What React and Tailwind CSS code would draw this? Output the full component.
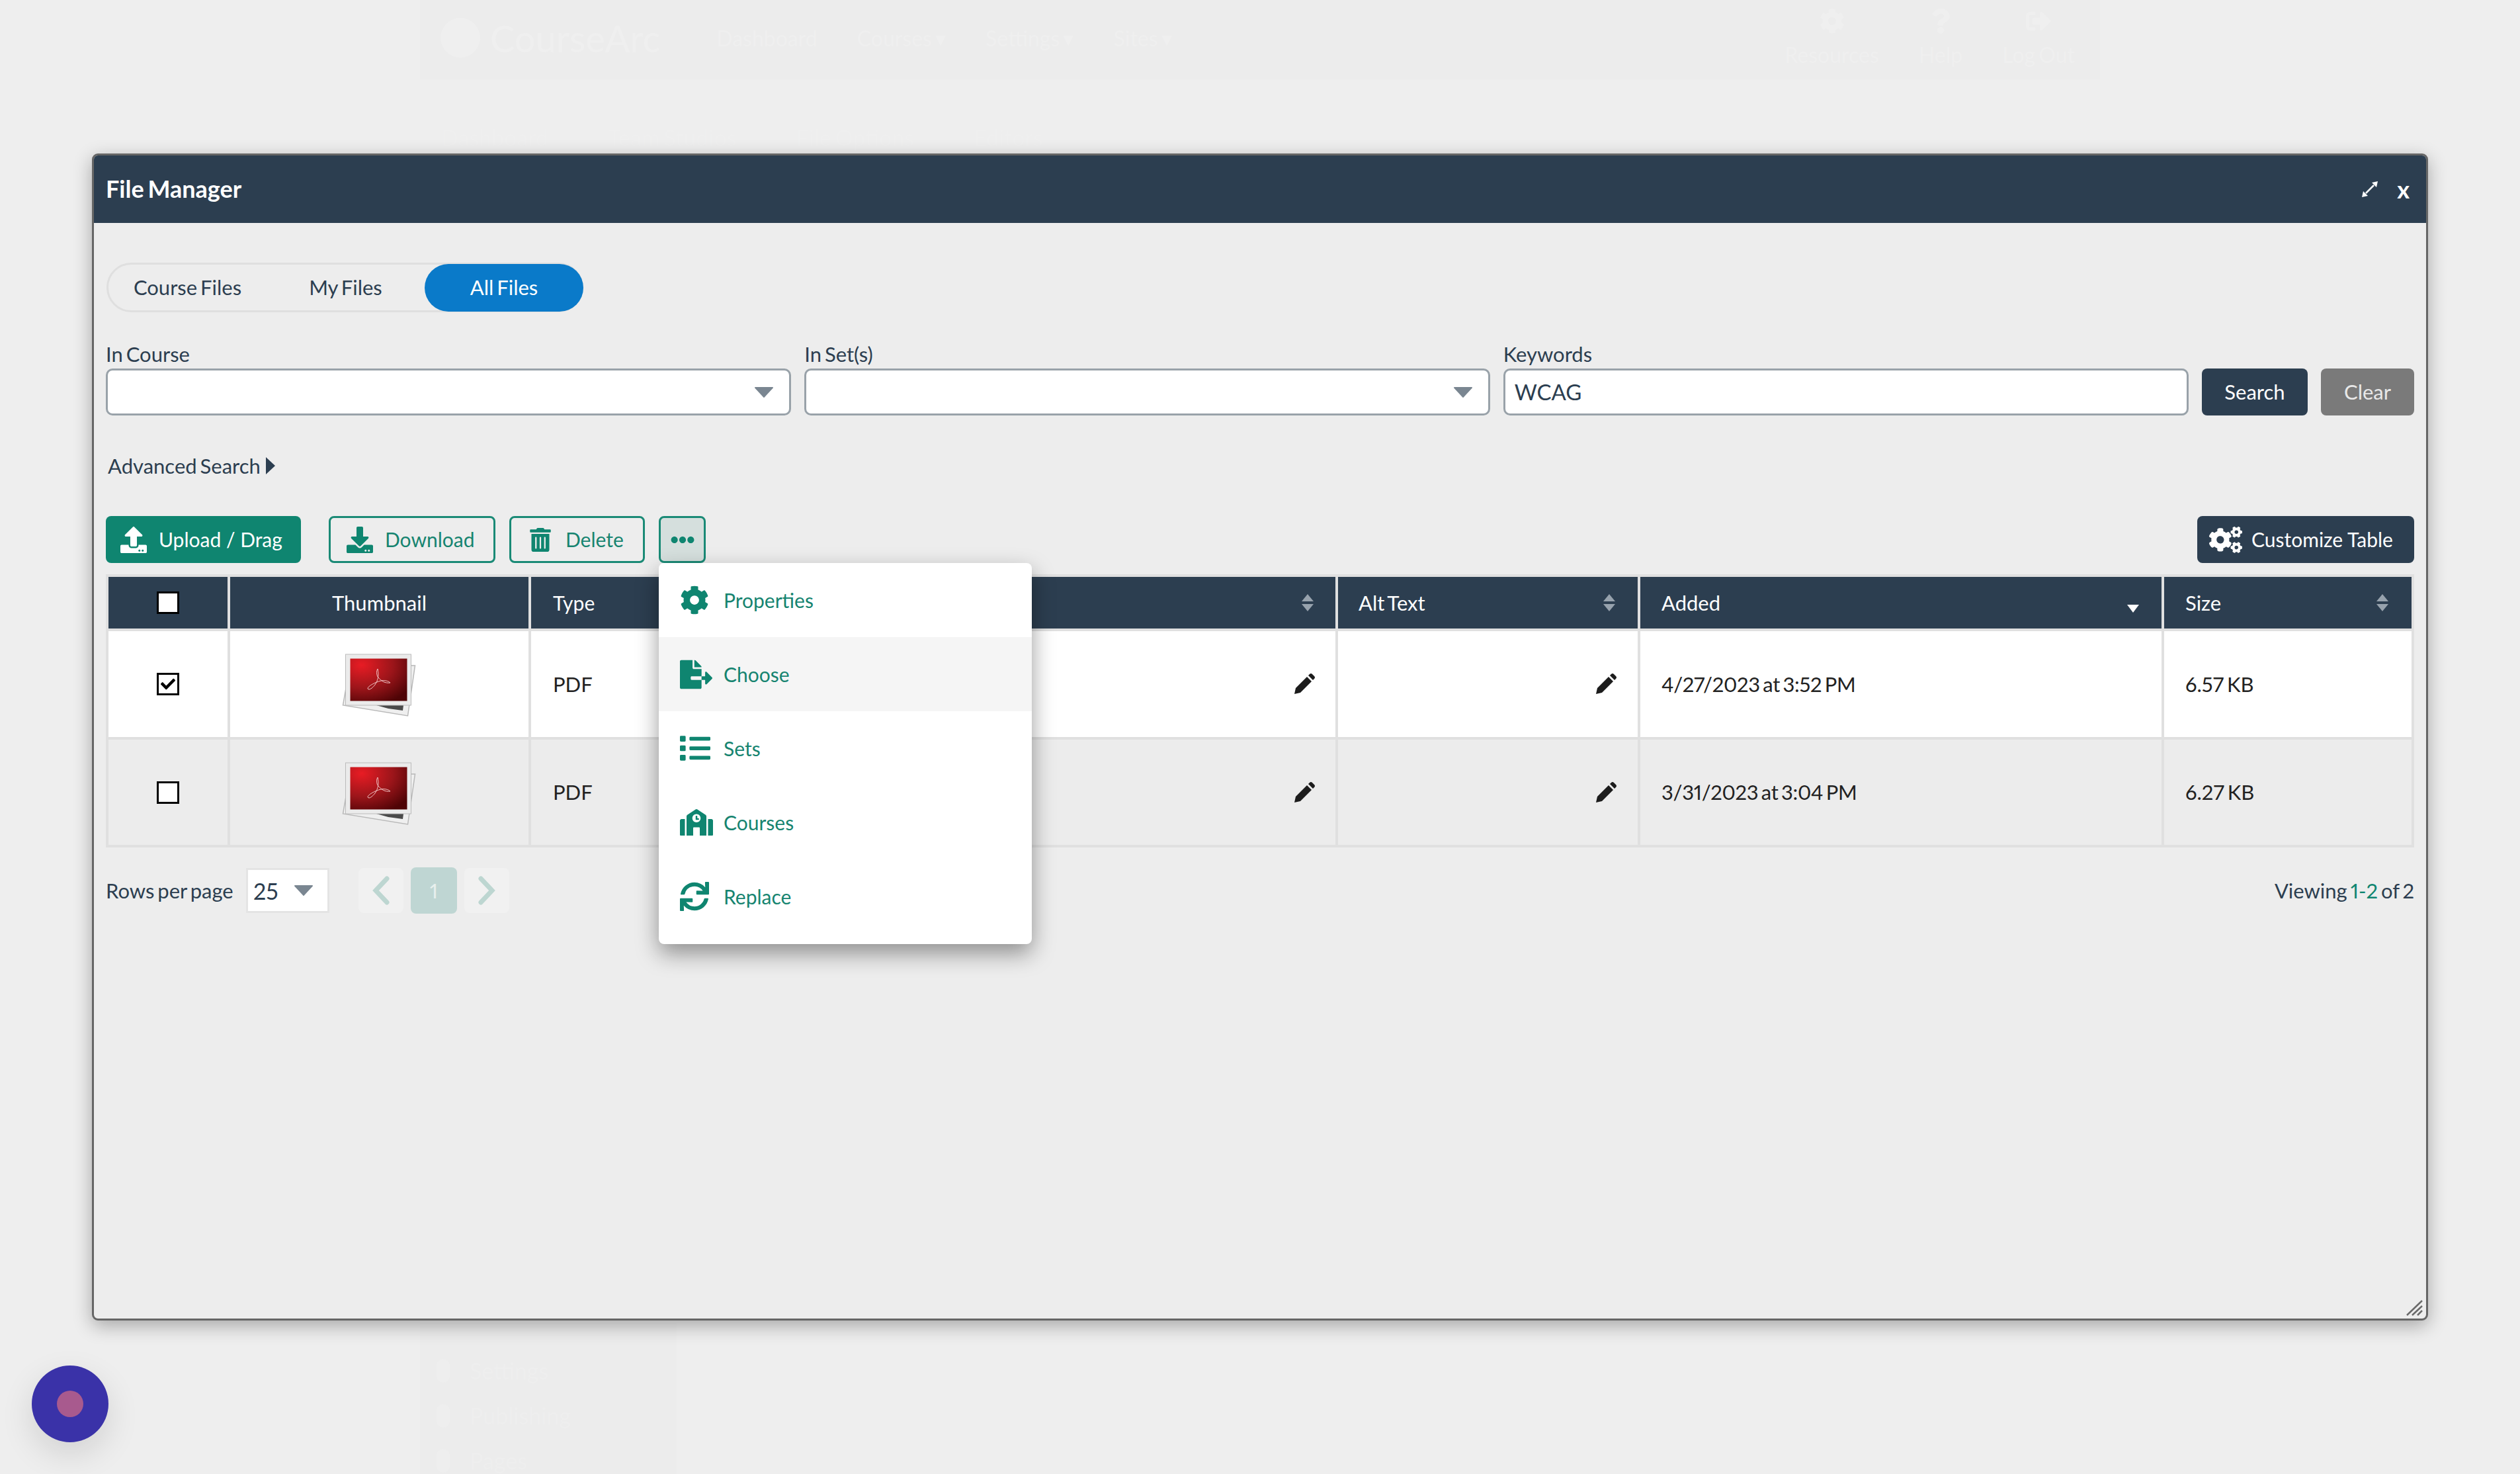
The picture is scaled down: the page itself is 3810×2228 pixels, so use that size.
import { FaCheck, FaCog, FaCogs, FaDownload, FaEllipsisH, FaFileExport, FaList, FaQuestion, FaSchool, FaSignOutAlt, FaSync, FaTrashAlt, FaUpload } from "react-icons/fa";

const headCell = "bg-[#2c3e50] text-white flex items-center";
const tabStyle = "h-[72px] flex items-center justify-center text-[31px]";
const outlineBtn =
  "h-[71px] border-[3px] border-[#1a8a76] rounded-[8px] flex items-center text-[#168470] text-[30px]";
const fieldStyle =
  "h-[71px] bg-white border-[3px] border-[#99a2a9] rounded-[10px] flex items-center";
const labelStyle = "block h-[40px] leading-[36px] text-[31px] text-[#2c3e50]";

const Caret = () => (
  <svg width="28" height="16" viewBox="0 0 28 16" className="shrink-0">
    <path d="M1 0h26a1 1 0 0 1 .8 1.6L14.8 15.4a1 1 0 0 1-1.6 0L.2 1.6A1 1 0 0 1 1 0z" fill="#7a8691" />
  </svg>
);

const SortIcon = () => (
  <svg width="20" height="26" viewBox="0 0 20 26" className="shrink-0">
    <path d="M10 0l9 11H1z" fill="#97a2ad" />
    <path d="M10 26l9-11H1z" fill="#97a2ad" />
  </svg>
);

const Pencil = () => (
  <svg width="32" height="32" viewBox="0 0 32 32" className="shrink-0">
    <path d="M1 31l2-9L20 5l7 7-17 17z" fill="#1c1c1c" />
    <path d="M22 3l2-2q2-2 4 0l3 3q2 2 0 4l-2 2z" fill="#1c1c1c" />
  </svg>
);

const PdfThumb = ({ id }) => (
  <svg width="112" height="96" viewBox="0 0 112 96" className="mt-[4px]">
    <defs>
      <radialGradient id={id} cx="0.2" cy="0.15" r="1">
        <stop offset="0" stopColor="#e81c24" />
        <stop offset="0.55" stopColor="#9c151a" />
        <stop offset="1" stopColor="#4f0406" />
      </radialGradient>
    </defs>
    <path d="M12 18L110.500 18L99.500 94L1.500 78z" fill="#efefef" stroke="#b8b8b8" strokeWidth="1.500" />
    <path d="M52 78h41l-1 8-22-3z" fill="#4a4a4a" />
    <rect x="5.500" y="1" width="99" height="77" fill="#ebebeb" stroke="#bbbbbb" />
    <rect x="12.500" y="7.500" width="86" height="64" fill={`url(#${id})`} />
    <path
      d="M54 23c2 10 1 16-4 24-4 5-9 9-11 6-1-3 11-10 20-12 5-1 11 0 14 3-8 1-13-2-19-9-2-4-2-9 0-12z"
      fill="none"
      stroke="#f0c4c4"
      strokeWidth="1"
    />
  </svg>
);

const MenuItem = ({ icon: Icon, iconClass, label, active }) => (
  <div className={`h-[112px] flex items-center pl-[32px] ${active ? "bg-[#f5f5f5]" : ""}`}>
    <div className="w-[66px] shrink-0 flex items-center">
      <Icon className={iconClass} />
    </div>
    <span className="text-[30px] text-[#168470]">{label}</span>
  </div>
);

const Row = ({ id, bg, checked, date, size }) => (
  <>
    <div className={`${bg} flex items-center justify-center`}>
      <div className="w-[34px] h-[34px] bg-white border-[3px] border-black flex items-center justify-center">
        {checked && <FaCheck className="text-[22px] text-black" />}
      </div>
    </div>
    <div className={`${bg} flex items-center justify-center pr-[2px]`}>
      <PdfThumb id={id} />
    </div>
    <div className={`${bg} flex items-center pl-[33px] text-[31px] text-[#222]`}>PDF</div>
    <div className={`${bg} flex items-center justify-end pr-[31px]`}>
      <Pencil />
    </div>
    <div className={`${bg} flex items-center justify-end pr-[32px]`}>
      <Pencil />
    </div>
    <div className={`${bg} flex items-center pl-[32px] text-[31px] tracking-[-0.35px] text-[#222]`}>{date}</div>
    <div className={`${bg} flex items-center pl-[32px] text-[31px] text-[#222]`}>{size}</div>
  </>
);

const App = () => {
  return (
    <div className="relative w-[3810px] h-[2228px] overflow-hidden bg-[#eeeeee] proportional-nums [word-spacing:-3px] font-['Lato','Noto_Sans',sans-serif]">
      {/* washed out page behind the dialog */}
      <div className="mx-auto w-[2540px] h-full flex flex-col text-[#efefef]">
        <div className="h-[120px] bg-[#ececec] flex justify-between pl-[31px] pr-[38px] shrink-0">
          <div className="flex items-center">
            <div className="w-[60px] h-[60px] rounded-full bg-[#efefef] mb-[6px]" />
            <span className="ml-[15px] text-[56px] mb-[4px]">CourseArc</span>
            <div className="ml-[85px] flex items-center gap-[60px] text-[32px] mb-[4px]">
              <span>Dashboard</span>
              <span>Courses ▾</span>
              <span>Settings ▾</span>
              <span>Sites ▾</span>
            </div>
          </div>
          <div className="flex items-center gap-[60px] text-[32px]">
            <div className="flex flex-col items-center gap-[8px]">
              <FaCog className="text-[38px]" />
              <span>Resources</span>
            </div>
            <div className="flex flex-col items-center gap-[8px]">
              <FaQuestion className="text-[38px]" />
              <span>Help</span>
            </div>
            <div className="flex flex-col items-center gap-[8px]">
              <FaSignOutAlt className="text-[38px]" />
              <span>Log Out</span>
            </div>
          </div>
        </div>
        <div className="mt-[68px] pl-[32px] flex gap-[90px] text-[34px] leading-[40px]">
          <span>Dashboard</span>
          <span>Team Studios</span>
          <span>File Options</span>
          <span>Editors</span>
        </div>
        <div className="mt-auto w-[388px] h-[228px] bg-[#ececec] flex flex-col justify-end gap-[28px] pl-[25px] text-[34px] leading-[40px] text-[#eeeeee]">
          <div className="flex items-center gap-[30px]">
            <div className="w-[20px] h-[36px] rounded-full bg-[#eeeeee]" />
            <span>Settings</span>
          </div>
          <div className="flex items-center gap-[30px]">
            <div className="w-[20px] h-[36px] rounded-full bg-[#eeeeee]" />
            <span>Publishing</span>
          </div>
          <div className="flex items-center gap-[30px]">
            <div className="w-[20px] h-[36px] rounded-full bg-[#eeeeee]" />
            <span>Pages</span>
          </div>
        </div>
      </div>

      {/* dialog */}
      <div className="absolute inset-0 pl-[139px] pt-[232px]">
        <div className="relative w-[3532px] h-[1764px] bg-[#ededed] border-[3px] border-[#666666] rounded-[9px] shadow-[0_8px_28px_rgba(0,0,0,0.3)]">
          <div className="h-[102px] bg-[#2c3e50] rounded-t-[6px] flex items-center justify-between pl-[18px] pr-[25px]">
            <h1 className="text-[36px] font-bold text-white mb-[3px]">File Manager</h1>
            <div className="flex items-center gap-[28px] text-white">
              <svg width="26" height="26" viewBox="0 0 26 26">
                <path d="M25 1l-9 2 7 7zM1 25l9-2-7-7z" fill="#ffffff" />
                <path d="M19 7l-6 6M7 19l6-6" stroke="#ffffff" strokeWidth="2.500" fill="none" />
              </svg>
              <span className="text-[36px] font-bold leading-none">x</span>
            </div>
          </div>

          <div className="px-[18px] pt-[60px]">
            <div className="ml-[1px] w-[721px] h-[75px] border-[3px] border-[#dfdfdf] rounded-full flex items-center">
              <div className={`${tabStyle} w-[239px] text-[#2c3e50]`}>Course Files</div>
              <div className={`${tabStyle} w-[239px] text-[#2c3e50]`}>My Files</div>
              <div className={`${tabStyle} w-[240px] -mr-[3px] text-white bg-[#0a7ac9] rounded-full`}>All Files</div>
            </div>

            <div className="mt-[45px] flex items-end gap-[20px]">
              <div className="flex-1">
                <label className={labelStyle}>In Course</label>
                <div className={`${fieldStyle} justify-end pr-[24px]`}>
                  <Caret />
                </div>
              </div>
              <div className="flex-1">
                <label className={labelStyle}>In Set(s)</label>
                <div className={`${fieldStyle} justify-end pr-[24px]`}>
                  <Caret />
                </div>
              </div>
              <div className="flex-1">
                <label className={labelStyle}>Keywords</label>
                <div className={`${fieldStyle} pl-[14px] text-[33px] text-[#2c3e50]`}>WCAG</div>
              </div>
              <button className="w-[160px] h-[71px] bg-[#2c3e50] rounded-[8px] text-white text-[31px]">Search</button>
              <button className="w-[141px] h-[71px] bg-[#7a7a7a] rounded-[8px] text-[#e8e8e8] text-[31px]">Clear</button>
            </div>

            <div className="mt-[56px] h-[40px] pl-[3px] flex items-center gap-[8px] text-[31px] text-[#2c3e50]">
              <span>Advanced Search</span>
              <svg width="14" height="26" viewBox="0 0 14 26">
                <path d="M0 0l14 13L0 26z" fill="#2c3e50" />
              </svg>
            </div>

            <div className="relative mt-[56px] flex items-center">
              <button className="w-[295px] h-[71px] bg-[#0f8570] rounded-[8px] flex items-center pl-[22px] gap-[18px] text-white text-[30px]">
                <FaUpload className="text-[40px]" />
                Upload / Drag
              </button>
              <button className={`${outlineBtn} w-[252px] ml-[42px] pl-[24px] gap-[18px]`}>
                <FaDownload className="text-[40px] text-[#0f8570]" />
                Download
              </button>
              <button className={`${outlineBtn} w-[205px] ml-[21px] pl-[26px] gap-[20px]`}>
                <FaTrashAlt className="text-[36px] text-[#0f8570]" />
                Delete
              </button>
              <button className="w-[71px] h-[71px] ml-[21px] border-[3px] border-[#1a8a76] rounded-[8px] bg-[#d5dfdd] flex items-center justify-center">
                <FaEllipsisH className="text-[36px] text-[#0f8570]" />
              </button>
              <button className="ml-auto w-[328px] h-[71px] bg-[#2c3e50] rounded-[8px] flex items-center pl-[18px] gap-[14px] text-white text-[30px]">
                <FaCogs className="text-[50px]" />
                Customize Table
              </button>

              {/* open actions menu */}
              <div className="absolute z-10 left-[836px] top-[71px] w-[564px] h-[576px] bg-white rounded-[8px] shadow-[0_14px_34px_rgba(0,0,0,0.4)] overflow-hidden">
                <MenuItem icon={FaCog} iconClass="text-[44px] text-[#0f8570]" label="Properties" />
                <MenuItem icon={FaFileExport} iconClass="text-[49px] text-[#0f8570]" label="Choose" active />
                <MenuItem icon={FaList} iconClass="text-[46px] text-[#0f8570]" label="Sets" />
                <MenuItem icon={FaSchool} iconClass="text-[50px] text-[#0f8570]" label="Courses" />
                <MenuItem icon={FaSync} iconClass="text-[44px] text-[#0f8570]" label="Replace" />
              </div>
            </div>

            <div className="mt-[17px] w-[3490px] p-[4px] gap-[4px] bg-[#e0e0e0] grid grid-cols-[180px_451px_300px_912px_453px_788px_374px] grid-rows-[78px_160px_159px]">
              <div className={`${headCell} justify-center`}>
                <div className="w-[34px] h-[34px] bg-white border-[3px] border-black" />
              </div>
              <div className={`${headCell} justify-center text-[31px]`}>Thumbnail</div>
              <div className={`${headCell} pl-[33px] text-[30px]`}>Type</div>
              <div className={`${headCell} justify-end pr-[32px]`}>
                <SortIcon />
              </div>
              <div className={`${headCell} justify-between pl-[31px] pr-[33px] text-[31px]`}>
                Alt Text
                <SortIcon />
              </div>
              <div className={`${headCell} justify-between pl-[32px] pr-[33px] text-[31px]`}>
                Added
                <svg width="20" height="12" viewBox="0 0 20 12" className="mt-[18px]">
                  <path d="M10 12l9-12H1z" fill="#ffffff" />
                </svg>
              </div>
              <div className={`${headCell} justify-between pl-[32px] pr-[34px] text-[31px]`}>
                Size
                <SortIcon />
              </div>
              <Row id="pdf-a" bg="bg-white" checked date="4/27/2023 at 3:52 PM" size="6.57 KB" />
              <Row id="pdf-b" bg="bg-[#ececec]" date="3/31/2023 at 3:04 PM" size="6.27 KB" />
            </div>

            <div className="mt-[30px] flex items-center text-[31px] text-[#2c3e50]">
              <span className="w-[212px]">Rows per page</span>
              <div className="w-[126px] h-[68px] bg-white border-[3px] border-[#e4e4e4] flex items-center justify-between pl-[8px] pr-[22px] text-[34px]">
                25
                <Caret />
              </div>
              <div className="ml-[44px] w-[68px] h-[68px] bg-[#f1f1f1] rounded-[8px] flex items-center justify-center">
                <svg width="28" height="44" viewBox="0 0 28 44">
                  <path d="M23 4L6 22l17 18" fill="none" stroke="#bdd6d1" strokeWidth="7" strokeLinecap="round" />
                </svg>
              </div>
              <div className="ml-[11px] w-[70px] h-[70px] bg-[#bfd6d3] rounded-[8px] flex items-center justify-center text-[#e8f0ee] text-[31px]">
                1
              </div>
              <div className="ml-[11px] w-[68px] h-[68px] bg-[#f1f1f1] rounded-[8px] flex items-center justify-center">
                <svg width="28" height="44" viewBox="0 0 28 44">
                  <path d="M5 4l17 18L5 40" fill="none" stroke="#bdd6d1" strokeWidth="7" strokeLinecap="round" />
                </svg>
              </div>
              <span className="ml-auto">
                Viewing <span className="text-[#0f8570]">1-2</span> of 2
              </span>
            </div>
          </div>

          {/* resize grip */}
          <svg width="26" height="24" viewBox="0 0 26 24" className="absolute right-[4px] bottom-[4px]">
            <path d="M1 23L24 1M9 23L24 9M17 23l7-7" stroke="#6a6a6a" strokeWidth="2.500" fill="none" />
          </svg>
        </div>
      </div>

      {/* chat bubble */}
      <div className="absolute left-[48px] top-[2064px] w-[116px] h-[116px] rounded-full bg-[#3a32a8] shadow-[0_18px_50px_rgba(0,0,0,0.12)] flex items-center justify-center">
        <div className="w-[40px] h-[40px] rounded-full bg-[#a85a8e]" />
      </div>
    </div>
  );
};

export default App;
